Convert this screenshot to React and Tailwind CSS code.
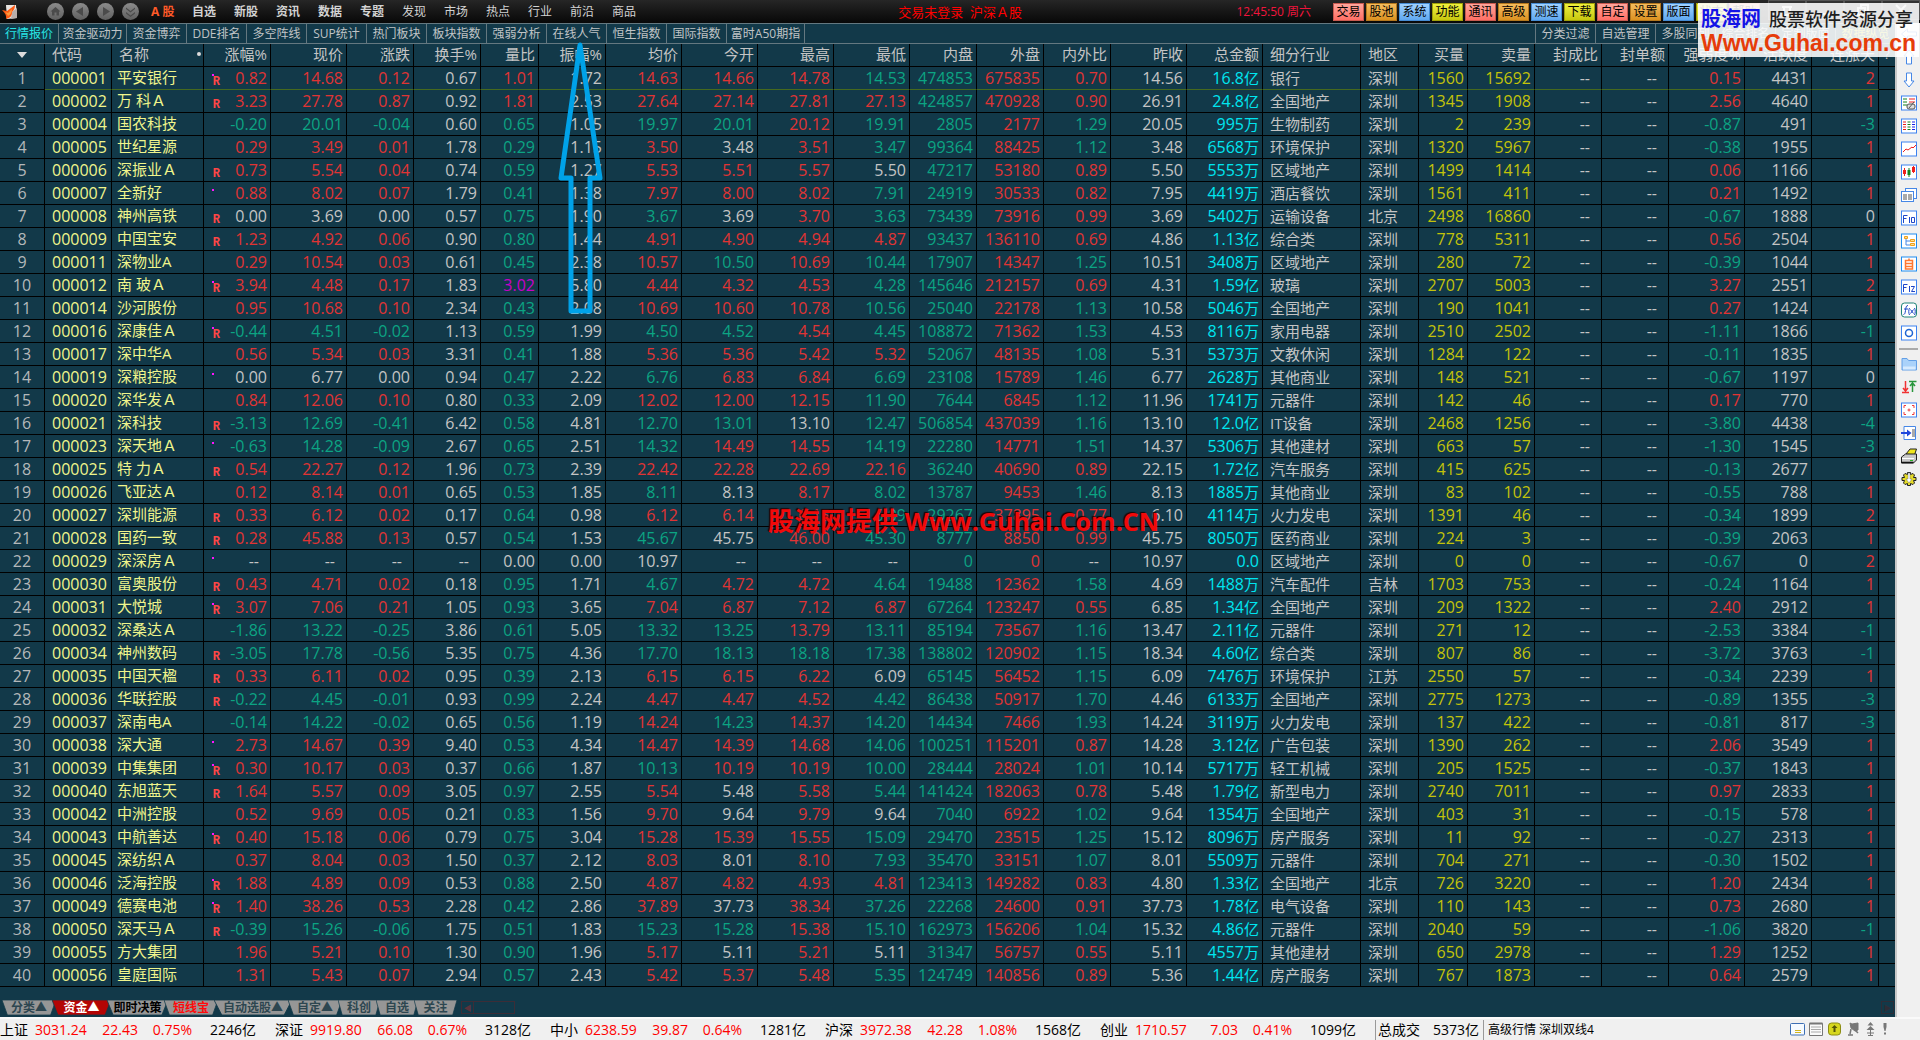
import React from "react";

// A trailing ^ on an average price means it rounds down to, but lies above, the close.
const RAW = `1|000001|平安银行|*R|0.82|14.68|0.12|0.67|1.01|1.72|14.63|14.66|14.78|14.53|474853|675835|0.70|14.56|16.8亿|银行|深圳|1560|15692|0.15|4431|2
2|000002|万 科Ａ|R|3.23|27.78|0.87|0.92|1.81|2.53|27.64|27.14|27.81|27.13|424857|470928|0.90|26.91|24.8亿|全国地产|深圳|1345|1908|2.56|4640|1
3|000004|国农科技||-0.20|20.01|-0.04|0.60|0.65|1.05|19.97|20.01|20.12|19.91|2805|2177|1.29|20.05|995万|生物制药|深圳|2|239|-0.87|491|-3
4|000005|世纪星源||0.29|3.49|0.01|1.78|0.29|1.15|3.50|3.48|3.51|3.47|99364|88425|1.12|3.48|6568万|环境保护|深圳|1320|5967|-0.38|1955|1
5|000006|深振业Ａ|R|0.73|5.54|0.04|0.74|0.59|1.27|5.53|5.51|5.57|5.50|47217|53180|0.89|5.50|5553万|区域地产|深圳|1499|1414|0.06|1166|1
6|000007|全新好|*|0.88|8.02|0.07|1.79|0.41|1.38|7.97|8.00|8.02|7.91|24919|30533|0.82|7.95|4419万|酒店餐饮|深圳|1561|411|0.21|1492|1
7|000008|神州高铁|R|0.00|3.69|0.00|0.57|0.75|1.90|3.67|3.69|3.70|3.63|73439|73916|0.99|3.69|5402万|运输设备|北京|2498|16860|-0.67|1888|0
8|000009|中国宝安|R|1.23|4.92|0.06|0.90|0.80|1.44|4.91|4.90|4.94|4.87|93437|136110|0.69|4.86|1.13亿|综合类|深圳|778|5311|0.56|2504|1
9|000011|深物业A||0.29|10.54|0.03|0.61|0.45|2.38|10.57|10.50|10.69|10.44|17907|14347|1.25|10.51|3408万|区域地产|深圳|280|72|-0.39|1044|1
10|000012|南 玻Ａ|*R|3.94|4.48|0.17|1.83|3.02|5.80|4.44|4.32|4.53|4.28|145646|212157|0.69|4.31|1.59亿|玻璃|深圳|2707|5003|3.27|2551|2
11|000014|沙河股份||0.95|10.68|0.10|2.34|0.43|2.08|10.69|10.60|10.78|10.56|25040|22178|1.13|10.58|5046万|全国地产|深圳|190|1041|0.27|1424|1
12|000016|深康佳Ａ|*R|-0.44|4.51|-0.02|1.13|0.59|1.99|4.50|4.52|4.54|4.45|108872|71362|1.53|4.53|8116万|家用电器|深圳|2510|2502|-1.11|1866|-1
13|000017|深中华A||0.56|5.34|0.03|3.31|0.41|1.88|5.36|5.36|5.42|5.32|52067|48135|1.08|5.31|5373万|文教休闲|深圳|1284|122|-0.11|1835|1
14|000019|深粮控股|*|0.00|6.77|0.00|0.94|0.47|2.22|6.76|6.83|6.84|6.69|23108|15789|1.46|6.77|2628万|其他商业|深圳|148|521|-0.67|1197|0
15|000020|深华发Ａ||0.84|12.06|0.10|0.80|0.33|2.09|12.02|12.00|12.15|11.90|7644|6845|1.12|11.96|1741万|元器件|深圳|142|46|0.17|770|1
16|000021|深科技|R|-3.13|12.69|-0.41|6.42|0.58|4.81|12.70|13.01|13.10|12.47|506854|437039|1.16|13.10|12.0亿|IT设备|深圳|2468|1256|-3.80|4438|-4
17|000023|深天地Ａ|*|-0.63|14.28|-0.09|2.67|0.65|2.51|14.32|14.49|14.55|14.19|22280|14771|1.51|14.37|5306万|其他建材|深圳|663|57|-1.30|1545|-3
18|000025|特 力Ａ|R|0.54|22.27|0.12|1.96|0.73|2.39|22.42|22.28|22.69|22.16|36240|40690|0.89|22.15|1.72亿|汽车服务|深圳|415|625|-0.13|2677|1
19|000026|飞亚达Ａ||0.12|8.14|0.01|0.65|0.53|1.85|8.11|8.13|8.17|8.02|13787|9453|1.46|8.13|1885万|其他商业|深圳|83|102|-0.55|788|1
20|000027|深圳能源|R|0.33|6.12|0.02|0.17|0.64|0.98|6.12|6.14|6.15|6.09|29267|37895|0.77|6.10|4114万|火力发电|深圳|1391|46|-0.34|1899|2
21|000028|国药一致|R|0.28|45.88|0.13|0.57|0.54|1.53|45.67|45.75|46.00|45.30|8777|8850|0.99|45.75|8050万|医药商业|深圳|224|3|-0.39|2063|1
22|000029|深深房Ａ|*|--|--|--|--|0.00|0.00|10.97|--|--|--|0|0|--|10.97|0.0|区域地产|深圳|0|0|-0.67|0|2
23|000030|富奥股份|R|0.43|4.71|0.02|0.18|0.95|1.71|4.67|4.72|4.72|4.64|19488|12362|1.58|4.69|1488万|汽车配件|吉林|1703|753|-0.24|1164|1
24|000031|大悦城|*R|3.07|7.06|0.21|1.05|0.93|3.65|7.04|6.87|7.12|6.87|67264|123247|0.55|6.85|1.34亿|全国地产|深圳|209|1322|2.40|2912|1
25|000032|深桑达Ａ||-1.86|13.22|-0.25|3.86|0.61|5.05|13.32|13.25|13.79|13.11|85194|73567|1.16|13.47|2.11亿|元器件|深圳|271|12|-2.53|3384|-1
26|000034|神州数码|R|-3.05|17.78|-0.56|5.35|0.75|4.36|17.70|18.13|18.18|17.38|138802|120902|1.15|18.34|4.60亿|综合类|深圳|807|86|-3.72|3763|-1
27|000035|中国天楹|R|0.33|6.11|0.02|0.95|0.39|2.13|6.15|6.15|6.22|6.09|65145|56452|1.15|6.09|7476万|环境保护|江苏|2550|57|-0.34|2239|1
28|000036|华联控股|R|-0.22|4.45|-0.01|0.93|0.99|2.24|4.47|4.47|4.52|4.42|86438|50917|1.70|4.46|6133万|全国地产|深圳|2775|1273|-0.89|1355|-3
29|000037|深南电A||-0.14|14.22|-0.02|0.65|0.56|1.19|14.24^|14.23|14.37|14.20|14434|7466|1.93|14.24|3119万|火力发电|深圳|137|422|-0.81|817|-3
30|000038|深大通|*|2.73|14.67|0.39|9.40|0.53|4.34|14.47|14.39|14.68|14.06|100251|115201|0.87|14.28|3.12亿|广告包装|深圳|1390|262|2.06|3549|1
31|000039|中集集团|*R|0.30|10.17|0.03|0.37|0.66|1.87|10.13|10.19|10.19|10.00|28444|28024|1.01|10.14|5717万|轻工机械|深圳|205|1525|-0.37|1843|1
32|000040|东旭蓝天|R|1.64|5.57|0.09|3.05|0.97|2.55|5.54|5.48|5.58|5.44|141424|182063|0.78|5.48|1.79亿|新型电力|深圳|2740|7011|0.97|2833|1
33|000042|中洲控股||0.52|9.69|0.05|0.21|0.83|1.56|9.70|9.64|9.79|9.64|7040|6922|1.02|9.64|1354万|全国地产|深圳|403|31|-0.15|578|1
34|000043|中航善达|*R|0.40|15.18|0.06|0.79|0.75|3.04|15.28|15.39|15.55|15.09|29470|23515|1.25|15.12|8096万|房产服务|深圳|11|92|-0.27|2313|1
35|000045|深纺织Ａ||0.37|8.04|0.03|1.50|0.37|2.12|8.03|8.01|8.10|7.93|35470|33151|1.07|8.01|5509万|元器件|深圳|704|271|-0.30|1502|1
36|000046|泛海控股|*R|1.88|4.89|0.09|0.53|0.88|2.50|4.87|4.82|4.93|4.81|123413|149282|0.83|4.80|1.33亿|全国地产|北京|726|3220|1.20|2434|1
37|000049|德赛电池|*R|1.40|38.26|0.53|2.28|0.42|2.86|37.89|37.73|38.34|37.26|22268|24600|0.91|37.73|1.78亿|电气设备|深圳|110|143|0.73|2680|1
38|000050|深天马Ａ|R|-0.39|15.26|-0.06|1.75|0.51|1.83|15.23|15.28|15.38|15.10|162973|156206|1.04|15.32|4.86亿|元器件|深圳|2040|59|-1.06|3820|-1
39|000055|方大集团||1.96|5.21|0.10|1.30|0.90|1.96|5.17|5.11|5.21|5.11|31347|56757|0.55|5.11|4557万|其他建材|深圳|650|2978|1.29|1252|1
40|000056|皇庭国际||1.31|5.43|0.07|2.94|0.57|2.43|5.42|5.37|5.48|5.35|124749|140856|0.89|5.36|1.44亿|房产服务|深圳|767|1873|0.64|2579|1`;

const ROWS = RAW.split("\n").map((line) => line.split("|"));

const RED = "text-[#e03434]";
const GREEN = "text-[#0ca483]";
const GRAY = "text-[#c4c4c4]";
const OLIVE = "text-[#c3c30a]";

const sign = (v) => (v > 0 ? RED : v < 0 ? GREEN : GRAY);
const bySign = (v) => sign(parseFloat(v));
const byClose = (v, row) => (v.endsWith("^") ? RED : sign(parseFloat(v) - parseFloat(row[17])));
const fixed = (c) => () => c;

const COLUMNS = [
  { label: "涨幅%", width: "w-[67px]", field: 4, tone: bySign },
  { label: "现价", width: "w-[76px]", field: 5, tone: byClose },
  { label: "涨跌", width: "w-[67px]", field: 6, tone: bySign },
  { label: "换手%", width: "w-[67px]", field: 7, tone: fixed(GRAY) },
  {
    label: "量比",
    width: "w-[58px]",
    field: 8,
    tone: (v) => (+v > 3 ? "text-[#c800c8]" : +v === 0 ? GRAY : sign(+v - 1)),
  },
  { label: "振幅%", width: "w-[67px]", field: 9, tone: fixed(GRAY) },
  { label: "均价", width: "w-[76px]", field: 10, tone: byClose },
  { label: "今开", width: "w-[76px]", field: 11, tone: byClose },
  { label: "最高", width: "w-[76px]", field: 12, tone: byClose },
  { label: "最低", width: "w-[76px]", field: 13, tone: byClose },
  { label: "内盘", width: "w-[67px]", field: 14, tone: fixed(GREEN) },
  { label: "外盘", width: "w-[67px]", field: 15, tone: fixed(RED) },
  { label: "内外比", width: "w-[67px]", field: 16, tone: (v) => sign(1 - v) },
  { label: "昨收", width: "w-[76px]", field: 17, tone: fixed(GRAY) },
  { label: "总金额", width: "w-[76px]", field: 18, tone: fixed("text-[#00e6f0]") },
  { label: "细分行业", width: "w-[98px]", field: 19, left: true, tone: fixed(GRAY) },
  { label: "地区", width: "w-[58px]", field: 20, left: true, tone: fixed(GRAY) },
  { label: "买量", width: "w-[49px]", field: 21, tone: fixed(OLIVE) },
  { label: "卖量", width: "w-[67px]", field: 22, tone: fixed(OLIVE) },
  { label: "封成比", width: "w-[67px]", empty: true, tone: fixed(GRAY) },
  { label: "封单额", width: "w-[67px]", empty: true, tone: fixed(GRAY) },
  { label: "强弱度%", width: "w-[76px]", field: 23, tone: bySign },
  { label: "活跃度", width: "w-[67px]", field: 24, tone: fixed(GRAY) },
  { label: "连涨天", width: "w-[67px]", field: 25, tone: bySign },
];

const MENU = ["自选", "新股", "资讯", "数据", "专题", "发现", "市场", "热点", "行业", "前沿", "商品"];

const SUBTABS = [
  ["行情报价", "w-[59px]"],
  ["资金驱动力", "w-[68px]"],
  ["资金博弈", "w-[60px]"],
  ["DDE排名", "w-[60px]"],
  ["多空阵线", "w-[60px]"],
  ["SUP统计", "w-[60px]"],
  ["热门板块", "w-[60px]"],
  ["板块指数", "w-[60px]"],
  ["强弱分析", "w-[60px]"],
  ["在线人气", "w-[60px]"],
  ["恒生指数", "w-[60px]"],
  ["国际指数", "w-[60px]"],
  ["富时A50期指", "w-[78px]"],
];

const RIGHT_TABS = ["分类过滤", "自选管理", "多股同列", "综合排名", "定制版面", "数据纵览"];

const BTN = {
  red: "from-[#ffa59c] to-[#ff6e64] border-[#c85a50]",
  orange: "from-[#f5bc5c] to-[#dc921e] border-[#b4781e]",
  blue: "from-[#a0d2ff] to-[#5fa8f0] border-[#468cd2]",
  yellow: "from-[#f0f03c] to-[#c8c80a] border-[#a0a00a]",
};

const ACTIONS = [
  ["交易", BTN.red],
  ["股池", BTN.orange],
  ["系统", BTN.blue],
  ["功能", BTN.yellow],
  ["通讯", BTN.red],
  ["高级", BTN.orange],
  ["测速", BTN.blue],
  ["下载", BTN.yellow],
  ["自定", BTN.red],
  ["设置", BTN.orange],
  ["版面", BTN.blue],
  ["状态", BTN.yellow],
  ["帮助", BTN.red],
];

const INDEXES = [
  ["上证", "3031.24", "22.43", "0.75%", "2246亿"],
  ["深证", "9919.80", "66.08", "0.67%", "3128亿"],
  ["中小", "6238.59", "39.87", "0.64%", "1281亿"],
  ["沪深", "3972.38", "42.28", "1.08%", "1568亿"],
  ["创业", "1710.57", "7.03", "0.41%", "1099亿"],
];

const FOOT_TABS = [
  ["分类▲", "w-[54px]", "text-[#2d4650]"],
  ["资金▲", "w-[59px]", "text-white"],
  ["即时决策", "w-[61px]", "text-black"],
  ["短线宝", "w-[54px]", "text-[#ff0a0a]"],
  ["自动选股▲", "w-[78px]", "text-[#2d4650]"],
  ["自定▲", "w-[54px]", "text-[#2d4650]"],
  ["科创", "w-[42px]", "text-[#2d4650]"],
  ["自选", "w-[42px]", "text-[#2d4650]"],
  ["关注", "w-[43px]", "text-[#2d4650]"],
];

function Logo() {
  return (
    <svg width="16" height="16" viewBox="0 0 16 16" aria-hidden="true">
      <path d="M4 1h10l1 13-10 1z" fill="#e8e4e0" />
      <path d="M10 8l5-4v10l-6 1z" fill="#b9aeaa" />
      <path d="M0 6l5 1 8-6c0 3-1 5-3 7 0 4-2 6-6 7C5 12 3 9 0 6z" fill="#ff5a14" />
      <path d="M3 8l3 1 4-4c0 4-2 6-4 7C5 10 4 9 3 8z" fill="#ff9a3c" />
    </svg>
  );
}

const NAV_GLYPHS = [
  ["首页", "M8.500 4l5 4.500h-1.500v4H9.500v-3h-2v3H5v-4H3.500z"],
  ["后退", "M11 4v9L4 8.500z"],
  ["前进", "M6 4v9l7-4.500z"],
  ["更多", "M4 4.500l4.500 3.500L13 4.500v1.500L8.500 9.500 4 6zM4 9l4.500 3.500L13 9v1.500L8.500 14 4 10.500z"],
];

function NavButton({ label, d }) {
  return (
    <button aria-label={label} className="h-[17px] w-[17px] rounded-full bg-linear-to-b from-[#8c8c8c] to-[#5f5f5f]">
      <svg width="17" height="17" viewBox="0 0 17 17" aria-hidden="true">
        <path d={d} fill="#4b4b4b" />
      </svg>
    </button>
  );
}

const Frame = ({ stroke = "#3c82f0" }) => (
  <rect x="0.500" y="1" width="15" height="14" fill="#fff" stroke={stroke} />
);

const SIDE_TOP = [
  ["后退", <path d="M0.500 8l6-5v3h9v4h-9v3z" fill="#fff" stroke="#4687e6" />],
  ["上移", <path d="M8 1l5 6H10.500v8H5.500V7H3z" fill="#fff" stroke="#4687e6" />],
  ["下移", <path d="M8 15l5-6H10.500V1H5.500v8H3z" fill="#fff" stroke="#4687e6" />],
  [
    "选股",
    <>
      <Frame />
      <path d="M2 4h4M2 7h4M2 10h4" stroke="#14821e" />
      <path d="M8 4h6M8 7h6" stroke="#f01e1e" />
      <rect x="6" y="9" width="8" height="5" rx="2" fill="#ddd" stroke="#555" />
      <path d="M8 13l5-6" stroke="#555" />
    </>,
  ],
  [
    "行情表",
    <>
      <Frame />
      <path d="M2 4h3M2 6.500h3M2 9h3M2 11.500h3" stroke="#e61e1e" />
      <path d="M6.500 4h3M6.500 6.500h3M6.500 9h3M6.500 11.500h3" stroke="#14821e" />
      <path d="M11 4h3M11 6.500h3M11 9h3M11 11.500h3" stroke="#1e1ee6" />
    </>,
  ],
  [
    "分时图",
    <>
      <Frame />
      <path d="M2 11l3-3 2 1 4-3 1 1 3-3" fill="none" stroke="#f01e1e" />
    </>,
  ],
  [
    "K线图",
    <>
      <Frame />
      <path d="M3.500 4v8M12.500 2v7" stroke="#f01e1e" />
      <path d="M8 4v9" stroke="#14821e" />
      <path d="M2 6h3v4H2zM11 3h3v5h-3z" fill="#f01e1e" />
      <path d="M6.500 6h3v5h-3z" fill="#14821e" />
    </>,
  ],
  [
    "多窗口",
    <>
      <rect x="4.500" y="1.500" width="11" height="10" fill="#fff" stroke="#4687e6" />
      <rect x="0.500" y="4.500" width="12" height="10" fill="#fff" stroke="#4687e6" />
      <path d="M2 8h4M7 8h4M2 10h4M7 10h4M2 12h4M7 12h4" stroke="#555" />
    </>,
  ],
  [
    "F10",
    <>
      <Frame />
      <path d="M2.500 13V5.500h4M2.500 8.500h3M8.500 7v6M10.500 7.500h3v5h-3z" fill="none" stroke="#1e46c8" />
    </>,
  ],
  [
    "板块树",
    <>
      <Frame stroke="#1e8cf0" />
      <path d="M5 5v7h4M5 8h4" fill="none" stroke="#4687e6" />
      <path d="M3.500 3.500h3v2h-3zM9.500 6.500h4v2h-4zM9.500 10.500h4v2h-4z" fill="#ffe08c" stroke="#f0a01e" />
    </>,
  ],
  [
    "自选股",
    <>
      <Frame stroke="#1e8cf0" />
      <path d="M4.500 4.500h7v8.500h-7zM4.500 7.500h7M4.500 10.500h7M8 2.500v2" fill="none" stroke="#ff7832" strokeWidth="1.500" />
    </>,
  ],
  [
    "F12",
    <>
      <Frame />
      <path d="M2.500 13V5.500h4M2.500 8.500h3M8.500 7v6M10 7.500h3.500L10.500 12.500h3.500" fill="none" stroke="#1e46c8" />
    </>,
  ],
  [
    "公式",
    <>
      <rect x="0.500" y="1" width="15" height="14" rx="3" fill="#fff" stroke="#1e8278" />
      <path d="M7 3.500c-2 0-2 2-2.500 5S4 12 2.500 12.500M3 7h4M8.500 6c-1 2-1 5 0 7M13.500 6c1 2 1 5 0 7M9.500 7.500l3 4M12.500 7.500l-3 4" fill="none" stroke="#1e46c8" />
    </>,
  ],
  [
    "周期",
    <>
      <Frame />
      <circle cx="8" cy="8" r="3.500" fill="none" stroke="#1e64d2" strokeWidth="1.500" />
    </>,
  ],
];

const SIDE_BOTTOM = [
  [
    "文件夹",
    <>
      <path d="M1 2.500h5l1.500 2H15.500v9.500H1z" fill="#aad2fa" stroke="#64a0e6" />
      <path d="M2 10.500h12.500v3H2z" fill="#d7ebff" />
    </>,
  ],
  [
    "涨跌排序",
    <>
      <path d="M4.500 2v10M1 13.500h7M2 9l2.500 3L7 9" fill="none" stroke="#f03232" strokeWidth="1.500" />
      <path d="M11.500 13V4M8 2.500h7.500M9 7l2.500-3L14 7" fill="none" stroke="#28963c" strokeWidth="1.500" />
    </>,
  ],
  [
    "全屏",
    <>
      <Frame />
      <path d="M3 6V3.500h2M13 6V3.500h-2M3 10v2.500h2M13 10v2.500h-2M6.500 8h3M8 6.500v3" fill="none" stroke="#f03c3c" />
    </>,
  ],
  [
    "导出",
    <>
      <path d="M3 1.500h11.500v13H3z" fill="#fff" stroke="#4687e6" />
      <path d="M11 5h3M11 7h3M11 9h3M11 11h3" stroke="#555" />
      <path d="M0 7h6V4.500L10.500 8 6 11.500V9H0z" fill="#1e46dc" />
    </>,
  ],
  [
    "打印",
    <>
      <path d="M5 6l4-5h6.500l-2 6z" fill="#f0e61e" stroke="#222" />
      <path d="M0.500 9l4-3h11v6l-3 3H0.500z" fill="#c8c8c8" stroke="#222" />
      <path d="M1 10.500h12" stroke="#fff" />
      <path d="M9 12.500h3" stroke="#28b428" />
      <path d="M0.500 14.500h12" stroke="#111" strokeWidth="1.500" />
    </>,
  ],
  [
    "设置",
    <>
      <path
        d="M6.500 1.500h3v2l2.500-1 1.500 1.500-1 2.500h2.500v3h-2.500l1 2.500-1.500 1.500-2.500-1v2h-3v-2L4 13.500 2.500 12l1-2.500H1v-3h2.500L2.500 4 4 2.500l2.500 1z"
        fill="#e6dc28"
        stroke="#222"
      />
      <path d="M7 2h2v6h2L8 12 5 8h2z" fill="#fff" stroke="#777" strokeWidth="0.500" />
    </>,
  ],
];

function SideButton({ label, children }) {
  return (
    <button aria-label={label} className="flex h-[23px] w-full items-center justify-center pb-px">
      <svg width="16" height="16" viewBox="0 0 16 16" aria-hidden="true">
        {children}
      </svg>
    </button>
  );
}

function Header() {
  return (
    <header className="flex h-[23px] items-center justify-between bg-linear-to-b from-[#262626] to-[#080808] text-[12px] text-[#d2d2d2]">
      <div className="flex flex-1 items-center">
        <div className="flex w-[47px] pl-0.5">
          <Logo />
        </div>
        <div className="flex w-[104px] gap-2">
          {NAV_GLYPHS.map(([label, d]) => (
            <NavButton key={label} label={label} d={d} />
          ))}
        </div>
        <nav className="flex">
          <a href="#a" className="w-[41px] font-bold whitespace-nowrap text-[#ff5a28]">
            A 股
          </a>
          {MENU.map((m, i) => (
            <a key={m} href={"#" + m} className={"w-[42px] " + (i < 5 ? "font-bold" : "")}>
              {m}
            </a>
          ))}
        </nav>
      </div>
      <div className="pt-0.5 text-[13px] whitespace-pre text-[#ff0000]">交易未登录  沪深Ａ股</div>
      <div className="flex flex-1 items-center justify-end">
        <time className="mr-[22px] text-[#f0143c]">12:45:50 周六</time>
        <div className="flex gap-0.5">
          {ACTIONS.map(([label, tone]) => (
            <button
              key={label}
              className={"h-[18px] w-[31px] border bg-linear-to-b text-[12px] leading-4 text-black " + tone}
            >
              {label}
            </button>
          ))}
        </div>
        <div className="ml-2 flex h-[23px] w-[152px] text-[#c8c8c8]">
          {["换肤", "最小化", "还原", "关闭"].map((b, i) => (
            <button key={b} aria-label={b} className="flex h-[20px] flex-1 items-center justify-center border border-[#555] bg-[#333]">
              <svg width="14" height="14" viewBox="0 0 14 14" fill="none" stroke="currentColor" strokeWidth="2" aria-hidden="true">
                <path d={["M2 4h10M4 4v8h6V4", "M2 11h10", "M2 5h7v7H2zM5 5V2h7v7H9", "M2 2l10 10M12 2L2 12"][i]} />
              </svg>
            </button>
          ))}
        </div>
      </div>
    </header>
  );
}

function SubTabs() {
  return (
    <nav className="flex h-[21px] justify-between border-y border-[#647880] text-[12px] leading-[19px] text-[#c0c4c6]">
      <div className="flex">
        {SUBTABS.map(([t, w], i) => (
          <a
            key={t}
            href={"#" + t}
            className={"border-r border-[#647880] text-center whitespace-nowrap " + w + (i === 0 ? " text-[#28e6e6]" : "")}
          >
            {t}
          </a>
        ))}
      </div>
      <div className="flex">
        {RIGHT_TABS.map((t, i) => (
          <a
            key={t}
            href={"#" + t}
            className={"w-[60px] border-l border-[#647880] text-center" + (i === 5 ? " text-[#d2d21e]" : "")}
          >
            {t}
          </a>
        ))}
      </div>
    </nav>
  );
}

const CELL = "h-[23px] border-r border-b border-black p-0 ";

function Amount({ value }) {
  const unit = value.match(/[万亿]/);
  return (
    <>
      {unit ? value.slice(0, -1) : value}
      {unit && <span className="text-[15px] leading-none">{unit[0]}</span>}
    </>
  );
}

function Quotes() {
  return (
    <table className="w-full table-fixed border-separate border-spacing-0 leading-[22px] whitespace-nowrap">
      <colgroup>
        <col className="w-[45px]" />
        <col className="w-[67px]" />
        <col className="w-[92px]" />
        {COLUMNS.map((c) => (
          <col key={c.label} className={c.width} />
        ))}
        <col />
      </colgroup>
      <thead className="text-[15px] leading-[20px] text-[#c4c4c4]">
        <tr>
          <th className={CELL}>
            <svg className="mx-auto" width="10" height="6" viewBox="0 0 10 6" aria-label="排序">
              <path d="M0 0h10L5 6z" fill="#dcdcdc" />
            </svg>
          </th>
          <th className={CELL + "pb-0.5 pl-[7px] text-left font-normal"}>代码</th>
          <th className={CELL + "px-[7px] pb-0.5 font-normal"}>
            <div className="flex items-center justify-between">
              名称
              <span className="mr-[-5px] h-1 w-1 rounded-full bg-[#dcdcdc]" />
            </div>
          </th>
          {COLUMNS.map((c) => (
            <th key={c.label} className={CELL + "pb-0.5 font-normal " + (c.left ? "pl-[7px] text-left" : "pr-[3px] text-right")}>
              {c.label}
            </th>
          ))}
          <th className="h-[23px] border-b border-black p-0 text-center text-[12px] font-normal">?</th>
        </tr>
      </thead>
      <tbody className="text-[16px]">
        {ROWS.map((r, i) => {
          const cell = "h-[23px] border-r border-r-black border-b p-0 " + (i === 0 ? "border-b-[#46691e] " : "border-b-black ");
          return (
            <tr key={r[1]}>
              <td className={CELL + "text-center text-[#b4b8ba]"}>{r[0]}</td>
              <td className={cell + "pl-[7px] text-[#f0f58c]"}>{r[1]}</td>
              <td className={cell + "pb-0.5 pl-[5px] text-[15px] leading-[20px] text-[#f0f58c]"}>{r[2]}</td>
              {COLUMNS.map((c, k) => {
                const v = c.empty ? "--" : r[c.field];
                const tone = v === "--" ? GRAY : c.tone(v, r);
                const align = c.left ? "pl-[7px] text-left text-[15px] " : v === "--" ? "pr-[11px] text-right " : "pr-[3px] text-right ";
                if (k === 0) {
                  return (
                    <td key={c.label} className={cell + align + tone}>
                      <div className="flex justify-between">
                        <span className="flex w-4 flex-col pl-1">
                          <i className={"mt-[7px] ml-1 h-0.5 w-0.5 " + (r[3].includes("*") ? "bg-[#ff14ff]" : "")} />
                          <b className="ml-px font-['Liberation_Mono'] text-[12px] leading-[13px] text-[#ff4646]">
                            {r[3].includes("R") ? "R" : ""}
                          </b>
                        </span>
                        <span>{v}</span>
                      </div>
                    </td>
                  );
                }
                return (
                  <td key={c.label} className={cell + align + tone}>
                    {c.field === 18 ? <Amount value={v} /> : v.replace("^", "")}
                  </td>
                );
              })}
              <td className="h-[23px] border-b border-black p-0" />
            </tr>
          );
        })}
      </tbody>
    </table>
  );
}

function FootTabs() {
  return (
    <div className="flex items-center justify-between pb-0.5">
      <div className="flex items-center pl-0.5">
        {FOOT_TABS.map(([t, w, tone], i) => (
          <button key={t} className={"relative -mr-1 h-[15px] text-[12px] leading-[15px] font-bold whitespace-nowrap " + w + " " + tone}>
            <svg className="absolute inset-0 h-full w-full" viewBox="0 0 100 15" preserveAspectRatio="none" aria-hidden="true">
              <path d="M0 0H100L90 15H10z" fill={i === 1 ? "#b40505" : "#969696"} stroke="#123a49" />
            </svg>
            <span className="relative">{t}</span>
          </button>
        ))}
        <div className="ml-2 flex h-[13px] w-[54px] border border-[#3c2d37] text-[8px] leading-[11px] text-[#5a323c]">
          <span className="w-[12px] border-r border-[#3c2d37] text-center">◀</span>
        </div>
      </div>
      <button aria-label="向右滚动" className="mr-px h-[13px] w-[13px] border border-[#2d2d37] text-[8px] leading-[11px] text-[#2d2d37]">
        ▶
      </button>
    </div>
  );
}

function StatusIcons() {
  return (
    <div className="flex items-center gap-1">
      <svg width="15" height="13" viewBox="0 0 15 13" aria-label="消息">
        <rect x="0.500" y="0.500" width="14" height="11.500" rx="1" fill="#f5faff" stroke="#3c6eb4" />
        <path d="M5 7.500h6M5 9.500h6" stroke="#d2b41e" />
      </svg>
      <svg width="14" height="14" viewBox="0 0 14 14" aria-label="公告">
        <path d="M0.500 1.500h13v12h-13z" fill="#fafafa" stroke="#777" />
        <path d="M0.500 1.500h13" stroke="#777" strokeWidth="2" />
        <path d="M2 5h10M2 7.500h10M2 10h10" stroke="#aaa" />
      </svg>
      <svg className="ml-px" width="13" height="14" viewBox="0 0 13 14" aria-label="升级">
        <rect x="0.500" y="1" width="12" height="12" rx="3" fill="#d7d71e" stroke="#8c8c14" />
        <path d="M6.500 3l3 3h-2v4h-2V6h-2z" fill="#55550a" />
      </svg>
      <svg className="ml-0.5" width="13" height="14" viewBox="0 0 13 14" aria-label="卫星">
        <path d="M3 1l2 1 6-1v7l-3 1-4-3z" fill="#777" stroke="#777" />
        <path d="M4 7l-1 5M1 13h5M8 8l3 3" fill="none" stroke="#777" strokeWidth="1.500" />
      </svg>
      <svg className="ml-0.5" width="9" height="14" viewBox="0 0 9 14" aria-label="信号">
        <path d="M4.500 0l3 3.500h-6zM4.500 4l4 4h-8zM4 8h1v5H4zM1 10.500h7v1H1zM2 13h5v1H2z" fill="#777" />
      </svg>
      <svg className="ml-1" width="4" height="12" viewBox="0 0 4 12" aria-label="提示">
        <path d="M0.500 0h3v4l-1 4h-1l-1-4zM1 9.500h2v2H1z" fill="#777" />
      </svg>
    </div>
  );
}

function StatusBar() {
  return (
    <footer className="flex h-[23px] items-center border-t-2 border-[#fafafa] bg-[#f0f0f0] text-[14px] leading-[20px] whitespace-nowrap text-black">
      {INDEXES.map(([n, price, diff, pct, amt]) => (
        <div key={n} className="flex w-[275px] text-right text-[#ff0000]">
          <span className="w-[35px] text-left text-black">{n}</span>
          <span className="w-[51px]">{price}</span>
          <span className="w-[52px]">{diff}</span>
          <span className="w-[54px]">{pct}</span>
          <span className="w-[64px] text-black">{amt}</span>
        </div>
      ))}
      <div className="flex w-[108px] justify-between border-l border-[#999] pr-1 pl-0.5">
        <span>总成交</span>
        <span>5373亿</span>
      </div>
      <div className="flex-1 border-l border-[#999] pl-1 text-[12px]">高级行情 深圳双线4</div>
      <div className="mr-[33px] pb-px">
        <StatusIcons />
      </div>
    </footer>
  );
}

export default function App() {
  return (
    <div className="relative flex min-h-screen flex-col overflow-hidden bg-[#123949] font-['Open_Sans','Noto_Sans_CJK_SC',sans-serif]">
      <Header />
      <div className="flex flex-1">
        <main className="flex min-w-0 flex-1 flex-col justify-between">
          <div>
            <SubTabs />
            <Quotes />
          </div>
          <FootTabs />
        </main>
        <aside className="w-[25px] border-l-2 border-[#c8c8c8] bg-[#f0f0f0]">
          {SIDE_TOP.map(([label, art], i) => (
            <SideButton key={label + i} label={label}>
              {art}
            </SideButton>
          ))}
          <hr className="mx-0.5 my-[3px] border-t-2 border-[#aaa]" />
          {SIDE_BOTTOM.map(([label, art]) => (
            <SideButton key={label} label={label}>
              {art}
            </SideButton>
          ))}
        </aside>
      </div>
      <StatusBar />

      <svg className="pointer-events-none absolute top-[41px] left-[558px]" width="46" height="275" viewBox="0 0 46 275" aria-hidden="true">
        <path d="M22 4L3 137H13V270H32V137H42Z" fill="none" stroke="#00a2e8" strokeWidth="5" strokeLinejoin="round" />
      </svg>

      <div className="pointer-events-none absolute top-[503px] left-[768px] text-[26px] leading-[36px] font-bold whitespace-nowrap text-[#f00a0a] [text-shadow:-1px_-1px_1px_#200]">
        股海网提供 <span className="text-[25px]">Www.Guhai.Com.CN</span>
      </div>

      <div className="pointer-events-none absolute top-[3px] right-px h-[54px] w-[221px] overflow-hidden bg-white/88 pl-[3px] whitespace-nowrap">
        <div className="flex items-center justify-between pt-[3px] pr-1.5">
          <span className="text-[20px] leading-[26px] font-bold text-[#1414e6]">股海网</span>
          <span className="text-[18px] leading-[26px] font-medium text-[#1e1e1e]">股票软件资源分享</span>
        </div>
        <div className="font-['Liberation_Sans'] text-[23px] leading-[23px] font-bold text-[#e63c0a]">Www.Guhai.com.cn</div>
      </div>
    </div>
  );
}
